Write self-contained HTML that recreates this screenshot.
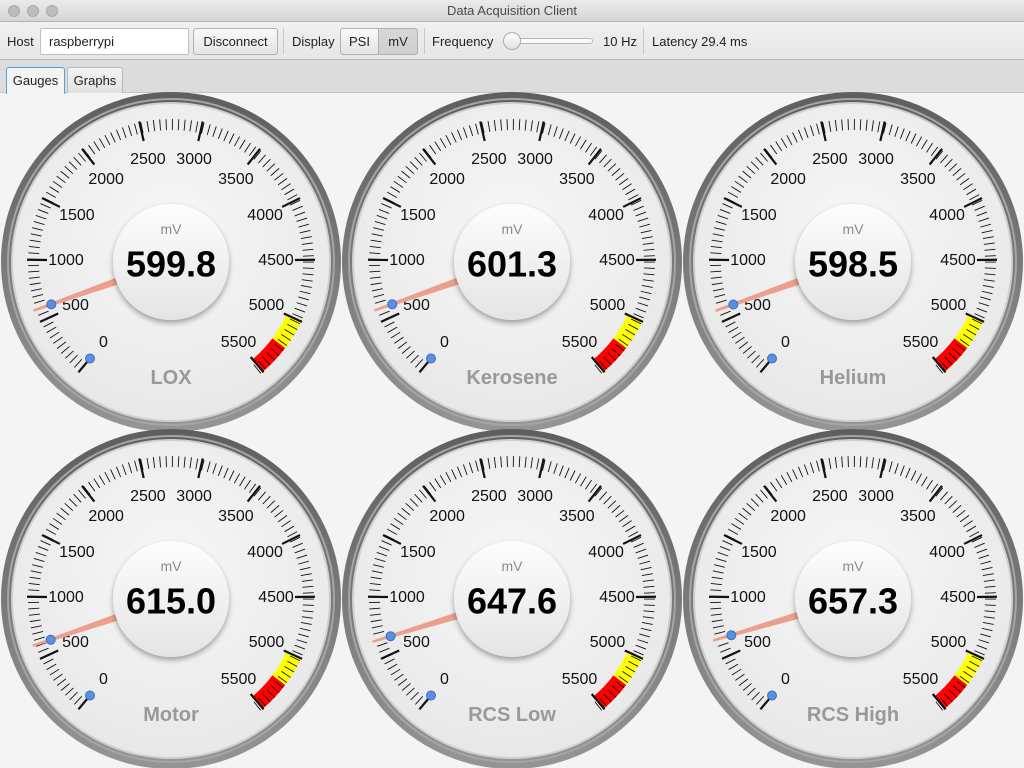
<!DOCTYPE html>
<html><head><meta charset="utf-8"><style>
*{margin:0;padding:0;box-sizing:border-box}
body{width:1024px;height:768px;overflow:hidden;background:#f4f4f4;font-family:"Liberation Sans",sans-serif;font-size:13px;color:#222;position:relative}
.abs{position:absolute}
#title{left:0;top:0;width:1024px;height:22px;background:linear-gradient(#ebebeb,#d5d5d5);border-bottom:1px solid #b5b5b5;text-align:center;line-height:22px;color:#4a4a4a;font-size:13px}
.dot{width:12px;height:12px;border-radius:50%;background:#bdbdbd;border:1px solid #a8a8a8;top:5px}
#tool{left:0;top:22px;width:1024px;height:38px;background:linear-gradient(#f0f0f0,#e6e6e6);border-bottom:1px solid #b8b8b8}
.t{top:34px;font-size:13px;color:#222}
.btn{top:28px;height:27px;border:1px solid #b0b0b0;border-radius:3px;background:linear-gradient(#fafafa,#e4e4e4);text-align:center;line-height:25px}
.sep{top:28px;width:1px;height:26px;background:#c8c8c8}
#tabs{left:0;top:60px;width:1024px;height:33px;background:#dcdcdc;border-bottom:1px solid #c4c4c4}
.tab{top:67px;height:26px;border:1px solid #b8b8b8;border-bottom:none;border-radius:3px 3px 0 0;background:linear-gradient(#f4f4f4,#e2e2e2);line-height:25px;text-align:center}
</style></head><body>
<div id="title" class="abs">Data Acquisition Client</div>
<div class="abs dot" style="left:8px"></div><div class="abs dot" style="left:27px"></div><div class="abs dot" style="left:46px"></div>
<div id="tool" class="abs"></div>
<div class="abs t" style="left:7px">Host</div>
<div class="abs" style="left:40px;top:28px;width:149px;height:27px;background:#fff;border:1px solid #c0c0c0;border-radius:2px;padding-left:8px;line-height:25px">raspberrypi</div>
<div class="abs btn" style="left:193px;width:85px">Disconnect</div>
<div class="abs sep" style="left:283px"></div>
<div class="abs t" style="left:292px">Display</div>
<div class="abs btn" style="left:340px;width:39px;border-radius:3px 0 0 3px">PSI</div>
<div class="abs btn" style="left:378px;width:40px;border-radius:0 3px 3px 0;background:linear-gradient(#d8d8d8,#cfcfcf)">mV</div>
<div class="abs sep" style="left:424px"></div>
<div class="abs t" style="left:432px">Frequency</div>
<div class="abs" style="left:503px;top:38px;width:90px;height:6px;border:1px solid #b8b8b8;border-radius:3px;background:#fafafa"></div>
<div class="abs" style="left:503px;top:32px;width:18px;height:18px;border-radius:50%;border:1px solid #aaa;background:linear-gradient(#fff,#e0e0e0)"></div>
<div class="abs t" style="left:603px">10 Hz</div>
<div class="abs sep" style="left:643px"></div>
<div class="abs t" style="left:652px">Latency 29.4 ms</div>
<div id="tabs" class="abs"></div>
<div class="abs tab" style="left:6px;width:59px;border:1px solid #4da3e0;border-bottom:none;background:#f4f4f4;height:27px">Gauges</div>
<div class="abs tab" style="left:67px;width:56px">Graphs</div>

<svg class="abs" style="left:0;top:0" width="1024" height="768" viewBox="0 0 1024 768">
<defs>
<linearGradient id="bz" x1="0" y1="0" x2="0" y2="1"><stop offset="0" stop-color="#5e5e5e"/><stop offset="1" stop-color="#959595"/></linearGradient>
<radialGradient id="fc" cx="0.5" cy="0.4" r="0.6"><stop offset="0" stop-color="#f7f7f7"/><stop offset="1" stop-color="#e8e8e8"/></radialGradient>
<linearGradient id="kn" x1="0" y1="0" x2="0" y2="1"><stop offset="0" stop-color="#fdfdfd"/><stop offset="1" stop-color="#e4e4e4"/></linearGradient>
<clipPath id="cp"><polygon points="0,0 124.5,156.5 250,250 250,-250 -250,-250 -250,250 -124.5,156.5"/></clipPath>
<filter id="sh" x="-30%" y="-30%" width="160%" height="160%"><feGaussianBlur in="SourceAlpha" stdDeviation="3"/><feOffset dy="3"/><feComponentTransfer><feFuncA type="linear" slope="0.35"/></feComponentTransfer><feMerge><feMergeNode/><feMergeNode in="SourceGraphic"/></feMerge></filter>
<g id="face">
<circle r="170" fill="url(#bz)"/>
<circle r="163" fill="none" stroke="#a5a5a5" stroke-width="2"/>
<circle r="160" fill="#cfcfcf"/>
<circle r="158" fill="url(#fc)"/>
<path d="M122.8,56.1 A135,135 0 0 1 107.8,81.2" fill="none" stroke="#ffff00" stroke-width="16"/>
<path d="M107.8,81.2 A135,135 0 0 1 86.8,103.4" fill="none" stroke="#ff0000" stroke-width="16"/>
<g clip-path="url(#cp)"><circle r="137.5" fill="none" stroke="#111" stroke-width="11" stroke-dasharray="0.9 5.231" stroke-dashoffset="0.45" transform="rotate(130)"/></g>
<g stroke="#111" stroke-width="2.2">
<line x1="0" y1="-124" x2="0" y2="-144" transform="rotate(-140)"/>
<line x1="0" y1="-124" x2="0" y2="-144" transform="rotate(-114.55)"/>
<line x1="0" y1="-124" x2="0" y2="-144" transform="rotate(-89.09)"/>
<line x1="0" y1="-124" x2="0" y2="-144" transform="rotate(-63.64)"/>
<line x1="0" y1="-124" x2="0" y2="-144" transform="rotate(-38.18)"/>
<line x1="0" y1="-124" x2="0" y2="-144" transform="rotate(-12.73)"/>
<line x1="0" y1="-124" x2="0" y2="-144" transform="rotate(12.73)"/>
<line x1="0" y1="-124" x2="0" y2="-144" transform="rotate(38.18)"/>
<line x1="0" y1="-124" x2="0" y2="-144" transform="rotate(63.64)"/>
<line x1="0" y1="-124" x2="0" y2="-144" transform="rotate(89.09)"/>
<line x1="0" y1="-124" x2="0" y2="-144" transform="rotate(114.55)"/>
<line x1="0" y1="-124" x2="0" y2="-144" transform="rotate(140)"/>
</g>
<circle cx="-81" cy="96.5" r="4.5" fill="#5b8fe0" stroke="#3d6fc4"/>
</g>
<g id="knob"><circle r="58" fill="url(#kn)" filter="url(#sh)"/></g>
<polygon id="ndl" points="-5,0 5,0 1.2,-146 -1.2,-146" fill="#eba08f"/>
</defs>
<g font-family="Liberation Sans, sans-serif" text-anchor="middle" dominant-baseline="central">

<g transform="translate(171,262)"><use href="#face"/>
<g font-size="16" fill="#111"><text x="-67.5" y="80.4">0</text><text x="-95.5" y="43.6">500</text><text x="-105" y="-1.7">1000</text><text x="-94.1" y="-46.6">1500</text><text x="-64.9" y="-82.5">2000</text><text x="-23.1" y="-102.4">2500</text><text x="23.1" y="-102.4">3000</text><text x="64.9" y="-82.5">3500</text><text x="94.1" y="-46.6">4000</text><text x="105" y="-1.7">4500</text><text x="95.5" y="43.6">5000</text><text x="67.5" y="80.4">5500</text></g>
<use href="#ndl" transform="rotate(-109.46)"/><circle cx="-119.7" cy="42.4" r="4.5" fill="#5b8fe0" stroke="#3d6fc4"/><use href="#knob"/>
<text y="-33" font-size="14" fill="#8a8a8a">mV</text><text y="2" font-size="36" font-weight="bold" fill="#000">599.8</text><text y="116" font-size="20" font-weight="bold" fill="#999">LOX</text></g>

<g transform="translate(512,262)"><use href="#face"/>
<g font-size="16" fill="#111"><text x="-67.5" y="80.4">0</text><text x="-95.5" y="43.6">500</text><text x="-105" y="-1.7">1000</text><text x="-94.1" y="-46.6">1500</text><text x="-64.9" y="-82.5">2000</text><text x="-23.1" y="-102.4">2500</text><text x="23.1" y="-102.4">3000</text><text x="64.9" y="-82.5">3500</text><text x="94.1" y="-46.6">4000</text><text x="105" y="-1.7">4500</text><text x="95.5" y="43.6">5000</text><text x="67.5" y="80.4">5500</text></g>
<use href="#ndl" transform="rotate(-109.39)"/><circle cx="-119.7" cy="42.3" r="4.5" fill="#5b8fe0" stroke="#3d6fc4"/><use href="#knob"/>
<text y="-33" font-size="14" fill="#8a8a8a">mV</text><text y="2" font-size="36" font-weight="bold" fill="#000">601.3</text><text y="116" font-size="20" font-weight="bold" fill="#999">Kerosene</text></g>

<g transform="translate(853,262)"><use href="#face"/>
<g font-size="16" fill="#111"><text x="-67.5" y="80.4">0</text><text x="-95.5" y="43.6">500</text><text x="-105" y="-1.7">1000</text><text x="-94.1" y="-46.6">1500</text><text x="-64.9" y="-82.5">2000</text><text x="-23.1" y="-102.4">2500</text><text x="23.1" y="-102.4">3000</text><text x="64.9" y="-82.5">3500</text><text x="94.1" y="-46.6">4000</text><text x="105" y="-1.7">4500</text><text x="95.5" y="43.6">5000</text><text x="67.5" y="80.4">5500</text></g>
<use href="#ndl" transform="rotate(-109.53)"/><circle cx="-119.7" cy="42.5" r="4.5" fill="#5b8fe0" stroke="#3d6fc4"/><use href="#knob"/>
<text y="-33" font-size="14" fill="#8a8a8a">mV</text><text y="2" font-size="36" font-weight="bold" fill="#000">598.5</text><text y="116" font-size="20" font-weight="bold" fill="#999">Helium</text></g>

<g transform="translate(171,599)"><use href="#face"/>
<g font-size="16" fill="#111"><text x="-67.5" y="80.4">0</text><text x="-95.5" y="43.6">500</text><text x="-105" y="-1.7">1000</text><text x="-94.1" y="-46.6">1500</text><text x="-64.9" y="-82.5">2000</text><text x="-23.1" y="-102.4">2500</text><text x="23.1" y="-102.4">3000</text><text x="64.9" y="-82.5">3500</text><text x="94.1" y="-46.6">4000</text><text x="105" y="-1.7">4500</text><text x="95.5" y="43.6">5000</text><text x="67.5" y="80.4">5500</text></g>
<use href="#ndl" transform="rotate(-108.69)"/><circle cx="-120.3" cy="40.8" r="4.5" fill="#5b8fe0" stroke="#3d6fc4"/><use href="#knob"/>
<text y="-33" font-size="14" fill="#8a8a8a">mV</text><text y="2" font-size="36" font-weight="bold" fill="#000">615.0</text><text y="116" font-size="20" font-weight="bold" fill="#999">Motor</text></g>

<g transform="translate(512,599)"><use href="#face"/>
<g font-size="16" fill="#111"><text x="-67.5" y="80.4">0</text><text x="-95.5" y="43.6">500</text><text x="-105" y="-1.7">1000</text><text x="-94.1" y="-46.6">1500</text><text x="-64.9" y="-82.5">2000</text><text x="-23.1" y="-102.4">2500</text><text x="23.1" y="-102.4">3000</text><text x="64.9" y="-82.5">3500</text><text x="94.1" y="-46.6">4000</text><text x="105" y="-1.7">4500</text><text x="95.5" y="43.6">5000</text><text x="67.5" y="80.4">5500</text></g>
<use href="#ndl" transform="rotate(-107.03)"/><circle cx="-121.4" cy="37.2" r="4.5" fill="#5b8fe0" stroke="#3d6fc4"/><use href="#knob"/>
<text y="-33" font-size="14" fill="#8a8a8a">mV</text><text y="2" font-size="36" font-weight="bold" fill="#000">647.6</text><text y="116" font-size="20" font-weight="bold" fill="#999">RCS Low</text></g>

<g transform="translate(853,599)"><use href="#face"/>
<g font-size="16" fill="#111"><text x="-67.5" y="80.4">0</text><text x="-95.5" y="43.6">500</text><text x="-105" y="-1.7">1000</text><text x="-94.1" y="-46.6">1500</text><text x="-64.9" y="-82.5">2000</text><text x="-23.1" y="-102.4">2500</text><text x="23.1" y="-102.4">3000</text><text x="64.9" y="-82.5">3500</text><text x="94.1" y="-46.6">4000</text><text x="105" y="-1.7">4500</text><text x="95.5" y="43.6">5000</text><text x="67.5" y="80.4">5500</text></g>
<use href="#ndl" transform="rotate(-106.54)"/><circle cx="-121.7" cy="36.2" r="4.5" fill="#5b8fe0" stroke="#3d6fc4"/><use href="#knob"/>
<text y="-33" font-size="14" fill="#8a8a8a">mV</text><text y="2" font-size="36" font-weight="bold" fill="#000">657.3</text><text y="116" font-size="20" font-weight="bold" fill="#999">RCS High</text></g>
</g>
</svg>
</body></html>
